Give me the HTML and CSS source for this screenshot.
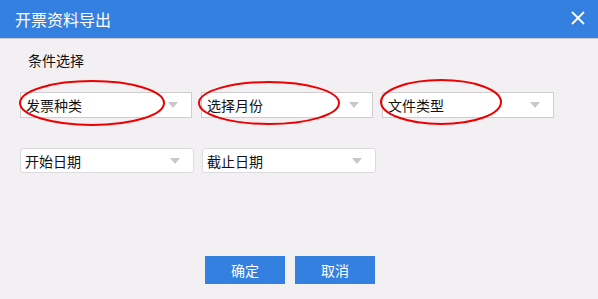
FILE: index.html
```html
<!DOCTYPE html>
<html lang="zh-CN">
<head>
  <meta charset="UTF-8" />
  <title>开票资料导出</title>
  <link rel="stylesheet" href="styles.css">
</head>
<body>
  <div class="dialog">
    <div class="header">
      <span class="title">开票资料导出</span>
      <svg class="close" width="14" height="14" viewBox="0 0 14 14">
        <path d="M1 1 L13 13 M13 1 L1 13" stroke="#fff" stroke-width="1.8" fill="none"/>
      </svg>
    </div>

    <div class="content">
      <div class="label">条件选择</div>

      <div class="row row-first">
        <div class="select"><span>发票种类</span><i class="arrow"></i></div>
        <div class="select"><span>选择月份</span><i class="arrow"></i></div>
        <div class="select"><span>文件类型</span><i class="arrow"></i></div>

        <svg class="mark mark-1" width="150" height="50" viewBox="0 0 150 50">
          <ellipse cx="75" cy="24" rx="72" ry="22" stroke="#e00" stroke-width="2" fill="none"/>
        </svg>
        <svg class="mark mark-2" width="146" height="48" viewBox="0 0 146 48">
          <ellipse cx="73" cy="23" rx="70" ry="21" stroke="#e00" stroke-width="2" fill="none"/>
        </svg>
        <svg class="mark mark-3" width="124" height="48" viewBox="0 0 124 48">
          <ellipse cx="62" cy="23" rx="60" ry="22" stroke="#e00" stroke-width="2" fill="none"/>
        </svg>
      </div>

      <div class="row row-second">
        <div class="select rounded"><span>开始日期</span><i class="arrow"></i></div>
        <div class="select rounded"><span>截止日期</span><i class="arrow"></i></div>
      </div>
    </div>

    <div class="buttons">
      <button class="btn">确定</button>
      <button class="btn">取消</button>
    </div>
  </div>
</body>
</html>
```

FILE: styles.css
```css
* {
  margin: 0;
  padding: 0;
  box-sizing: border-box;
  font-family: "Microsoft YaHei", "Noto Sans CJK SC", "Noto Sans", sans-serif;
}

body {
  background: #f2f0f3;
  width: 598px;
  height: 299px;
  overflow: hidden;
}

.header {
  height: 39px;
  background: #3480e0;
  border-bottom: 1px solid #c9c9cc;
  display: flex;
  align-items: center;
  justify-content: space-between;
  padding: 0 13px 1px 15px;
}

.title {
  color: #fff;
  font-size: 16px;
}

.close {
  display: block;
  margin-top: -1px;
}

.content {
  padding: 11px 20px 0;
}

.label {
  font-size: 14px;
  color: #111;
  margin-left: 8px;
  line-height: 20px;
}

.row {
  display: flex;
  gap: 9px;
  position: relative;
}

.row-first {
  margin-top: 22px;
}

.row-second {
  margin-top: 30px;
  gap: 8px;
}

.select {
  width: 172px;
  height: 26px;
  background: #fff;
  border: 1px solid #cfcdd0;
  display: flex;
  align-items: center;
  justify-content: space-between;
  padding: 0 13px 0 5px;
  font-size: 14px;
  color: #111;
}

.select.rounded {
  width: 174px;
  height: 25px;
  border-radius: 3px;
  border-color: #dcdadd;
  padding-left: 4px;
}

.arrow {
  width: 0;
  height: 0;
  border-left: 5px solid transparent;
  border-right: 5px solid transparent;
  border-top: 6px solid #c8c8cb;
}

.mark {
  position: absolute;
  pointer-events: none;
}

.mark-1 { left: -3px; top: -13px; }
.mark-2 { left: 176px; top: -12px; }
.mark-3 { left: 359px; top: -13px; }

.buttons {
  display: flex;
  gap: 10px;
  margin: 83px 0 0 205px;
}

.btn {
  width: 80px;
  height: 28px;
  background: #3480e0;
  color: #fff;
  border: none;
  font-size: 14px;
  cursor: pointer;
}
```
